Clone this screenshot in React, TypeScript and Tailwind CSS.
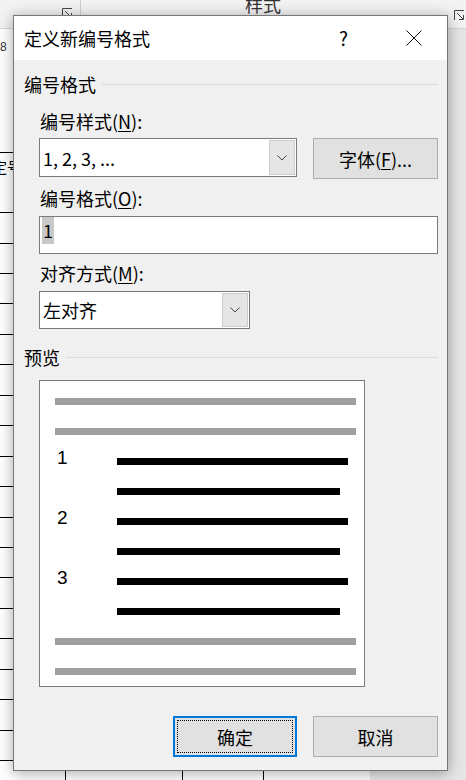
import React from 'react';

// Word 背景上的表格行高（像素，依截图量出）
const rowHeights = [60, 31, 30, 30, 31, 30, 31, 30, 31, 30, 31, 30, 30, 31, 30, 31, 30, 31, 30, 40];

const Chevron = () => (
    <svg width="10" height="6" viewBox="0 0 10 6" fill="none">
        <polyline points="0.5,0.5 5,5 9.5,0.5" stroke="#444" strokeWidth="1" />
    </svg>
);

const Launcher = () => (
    <svg width="11" height="11" viewBox="0 0 11 11" fill="none" stroke="#444" strokeWidth="1">
        <polyline points="0.5,10 0.5,0.5 10,0.5" />
        <line x1="3" y1="3" x2="9" y2="9" />
        <polyline points="9.5,5 9.5,9.5 5,9.5" />
    </svg>
);

const DropButton = () => (
    <div className="m-px flex w-[26px] items-center justify-center border border-[#cccccc] bg-[#e5e5e5]">
        <Chevron />
    </div>
);

const Background = () => (
    <>
        {/* 功能区 */}
        <div className="flex h-[29px] border-b border-[#d6d6d6] bg-[#f3f3f3]">
            <div className="w-[62px]" />
            <div className="pt-[8px]">
                <Launcher />
            </div>
            <div className="ml-[7px] w-px bg-[#d0d0d0]" />
            <div className="ml-[164px] -mt-[8px] text-[18px] leading-[24px] text-[#333]">样式</div>
            <div className="ml-auto pt-[10px] pr-[1px]">
                <Launcher />
            </div>
        </div>

        {/* 文档页面 */}
        <div className="w-[370px] bg-white">
            <div className="h-[123px] pt-[10px] font-['Liberation_Sans',sans-serif] text-[12px] leading-[16px] text-[#333]">
                8
            </div>
            <div className="border-t border-black">
                {rowHeights.map((h, i) => (
                    <div key={i} className="flex border-b border-black" style={{ height: h }}>
                        <div className="w-[66px] overflow-hidden border-r border-black">
                            {i === 0 && (
                                <div className="-ml-[8px] pt-[4px] text-[15px] leading-[20px] whitespace-nowrap">定号</div>
                            )}
                        </div>
                        <div className="w-[117px] border-r border-black" />
                        <div className="w-[81px] border-r border-black" />
                        <div className="flex-1" />
                    </div>
                ))}
            </div>
        </div>
    </>
);

const PreviewLine = ({ className }: { className: string }) => <div className={`h-[7px] ${className}`} />;

const NumberedLine = ({ n }: { n?: string }) => (
    <div className="flex h-[7px] items-start">
        <div className="w-[62px] pl-[2px]">
            {n && (
                <div className="-mt-[10px] font-['Liberation_Sans',sans-serif] text-[19px] leading-[19px]">{n}</div>
            )}
        </div>
        <div className={`h-[7px] bg-black ${n ? 'w-[231px]' : 'w-[223px]'}`} />
    </div>
);

const Preview = () => (
    <div className="ml-[15px] mt-[11px] h-[307px] w-[326px] border border-[#7a7a7a] bg-white">
        <div className="flex flex-col gap-[23px] pl-[15px] pt-[17px]">
            <PreviewLine className="w-[301px] bg-[#a0a0a0]" />
            <PreviewLine className="w-[301px] bg-[#a0a0a0]" />
            <NumberedLine n="1" />
            <NumberedLine />
            <NumberedLine n="2" />
            <NumberedLine />
            <NumberedLine n="3" />
            <NumberedLine />
            <PreviewLine className="w-[301px] bg-[#a0a0a0]" />
            <PreviewLine className="w-[301px] bg-[#a0a0a0]" />
        </div>
    </div>
);

const GroupHeader = ({ title, className }: { title: string; className: string }) => (
    <div className={`flex h-[24px] items-center ${className}`}>
        <span className="leading-[24px]">{title}</span>
        <div className="ml-[6px] h-px flex-1 bg-[#dcdcdc]" />
    </div>
);

const Dialog = () => (
    <div className="absolute left-[13px] top-[15px] flex h-[756px] w-[435px] flex-col border border-[#767676] bg-[#f0f0f0] shadow-[0_2px_14px_rgba(0,0,0,0.35)]">
        {/* 标题栏 */}
        <div className="flex h-[44px] items-center bg-white">
            <div className="flex-1 pl-[10px] text-[18px] leading-[24px]">定义新编号格式</div>
            <div className="w-[67px] pr-[6px] text-center text-[19px] leading-[24px]">?</div>
            <div className="flex w-[67px] items-center justify-center">
                <svg width="16" height="16" viewBox="0 0 16 16" fill="none" stroke="#111" strokeWidth="1">
                    <line x1="0.5" y1="0.5" x2="15.5" y2="15.5" />
                    <line x1="15.5" y1="0.5" x2="0.5" y2="15.5" />
                </svg>
            </div>
        </div>

        <div className="flex flex-col pl-[10px] pr-[9px] text-[18px]">
            <GroupHeader title="编号格式" className="mt-[12px]" />

            <div className="flex flex-col pl-[15px]">
                <div className="mt-[13px] pl-[1px] leading-[24px]">
                    编号样式(<span className="underline underline-offset-2">N</span>):
                </div>
                <div className="mt-[5px] flex items-start">
                    <div className="flex h-[39px] w-[258px] border border-[#7a7a7a] bg-white">
                        <div className="flex flex-1 items-center pl-[3px] leading-[24px]">1, 2, 3, ...</div>
                        <DropButton />
                    </div>
                    <div className="ml-auto flex h-[41px] w-[125px] items-center justify-center border border-[#adadad] bg-[#e1e1e1] leading-[24px]">
                        字体(<span className="underline underline-offset-2">F</span>)...
                    </div>
                </div>

                <div className="mt-[7px] pl-[1px] leading-[24px]">
                    编号格式(<span className="underline underline-offset-2">O</span>):
                </div>
                <div className="mt-[6px] flex h-[38px] items-start border border-[#7a7a7a] bg-white pl-[2px]">
                    <span className="bg-[#c8c8c8] px-[1px] leading-[27px]">1</span>
                </div>

                <div className="mt-[7px] pl-[1px] leading-[24px]">
                    对齐方式(<span className="underline underline-offset-2">M</span>):
                </div>
                <div className="mt-[6px] flex h-[38px] w-[211px] border border-[#7a7a7a] bg-white">
                    <div className="flex flex-1 items-center pl-[3px] leading-[24px]">左对齐</div>
                    <DropButton />
                </div>
            </div>

            <GroupHeader title="预览" className="mt-[16px]" />
            <Preview />

            <div className="mt-[29px] flex justify-end gap-[16px]">
                <div className="flex h-[41px] w-[124px] border-2 border-[#0078d7] bg-[#e1e1e1]">
                    <div className="m-[2px] flex flex-1 items-center justify-center border border-dotted border-black leading-[24px]">
                        确定
                    </div>
                </div>
                <div className="flex h-[41px] w-[125px] items-center justify-center border border-[#adadad] bg-[#e1e1e1] leading-[24px]">
                    取消
                </div>
            </div>
        </div>
    </div>
);

export default function App() {
    return (
        <div className="relative h-[780px] w-[466px] overflow-hidden bg-[#e6e6e6] font-['Noto_Sans_CJK_SC',sans-serif] text-black">
            <Background />
            <Dialog />
        </div>
    );
}
